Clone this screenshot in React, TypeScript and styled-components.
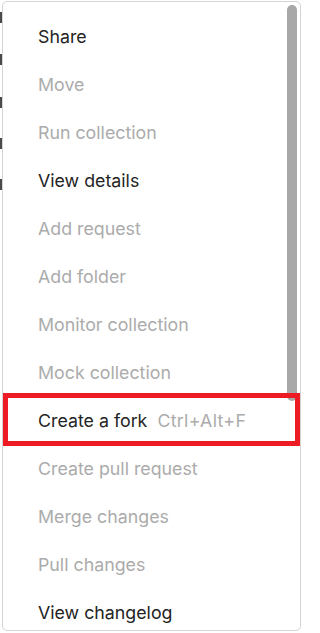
import React from 'react';
import styled, { createGlobalStyle } from 'styled-components';

const GlobalStyle = createGlobalStyle`
  html, body {
    margin: 0;
    padding: 0;
    background: #ffffff;
  }
  body {
    font-family: Inter, "Noto Sans", "Liberation Sans", sans-serif;
    -webkit-font-smoothing: antialiased;
  }
`;

const Page = styled.div`
  display: flex;
  align-items: flex-start;
  width: 303px;
  height: 633px;
  padding-top: 1px;
  box-sizing: border-box;
  overflow: hidden;
`;

// the page behind the menu peeks out along the left edge
const BehindStrip = styled.div`
  display: flex;
  flex-direction: column;
  width: 2px;
  padding-top: 11px;
`;

const BehindMark = styled.div<{ $gap: number }>`
  width: 2px;
  height: 11px;
  margin-bottom: ${(p) => p.$gap}px;
  background: #4a4a4a;
`;

const Panel = styled.div`
  position: relative;
  width: 299px;
  height: 630px;
  box-sizing: border-box;
  border: 1px solid #d4d4d4;
  border-radius: 5px;
  background: #ffffff;
  overflow: hidden;
`;

const List = styled.ul`
  list-style: none;
  margin: 0;
  padding: 10px 0 0 0;
`;

const Item = styled.li<{ $disabled?: boolean; $marked?: boolean }>`
  position: relative;
  display: flex;
  align-items: center;
  gap: 10px;
  height: 48px;
  padding-left: 35px;
  font-size: 17.8px;
  color: ${(p) => (p.$disabled ? '#ababab' : '#242424')};
  white-space: nowrap;

  ${(p) =>
    p.$marked &&
    `
    &::after {
      content: '';
      position: absolute;
      left: 0;
      right: 0;
      top: -3px;
      bottom: -2px;
      border: 5px solid #ed1c24;
      z-index: 2;
    }
  `}
`;

const Shortcut = styled.span`
  color: #ababab;
  letter-spacing: 0.3px;
`;

const ScrollThumb = styled.div`
  position: absolute;
  top: 3px;
  right: 3px;
  width: 10px;
  height: 396px;
  border-radius: 5px;
  background: #a8a8a8;
  z-index: 1;
`;

type Entry = { label: string; disabled?: boolean; shortcut?: string; marked?: boolean };

const entries: Entry[] = [
  { label: 'Share' },
  { label: 'Move', disabled: true },
  { label: 'Run collection', disabled: true },
  { label: 'View details' },
  { label: 'Add request', disabled: true },
  { label: 'Add folder', disabled: true },
  { label: 'Monitor collection', disabled: true },
  { label: 'Mock collection', disabled: true },
  { label: 'Create a fork', shortcut: 'Ctrl+Alt+F', marked: true },
  { label: 'Create pull request', disabled: true },
  { label: 'Merge changes', disabled: true },
  { label: 'Pull changes', disabled: true },
  { label: 'View changelog' },
];

const marks = [31, 32, 30, 30, 30];

const App = () => {
  return (
    <>
      <GlobalStyle />
      <Page>
        <BehindStrip>
          {marks.map((gap, i) => (
            <BehindMark key={i} $gap={gap} />
          ))}
        </BehindStrip>
        <Panel>
          <ScrollThumb />
          <List>
            {entries.map((e) => (
              <Item key={e.label} $disabled={e.disabled} $marked={e.marked}>
                {e.label}
                {e.shortcut && <Shortcut>{e.shortcut}</Shortcut>}
              </Item>
            ))}
          </List>
        </Panel>
      </Page>
    </>
  );
};

export default App;
